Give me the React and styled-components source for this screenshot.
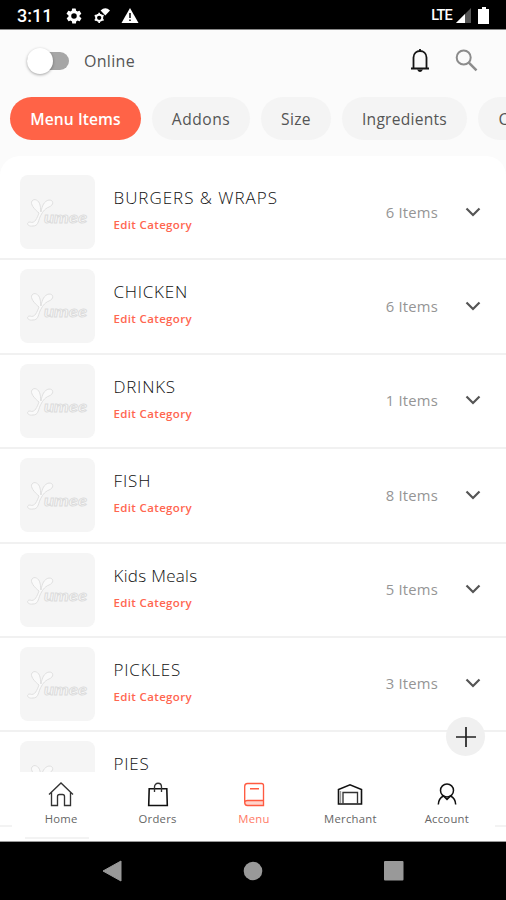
import styled, { createGlobalStyle } from 'styled-components';

const GlobalStyle = createGlobalStyle`
  body {
    margin: 0;
    background: #fbfbfb;
    font-family: "Open Sans", "Noto Sans", sans-serif;
  }
  * {
    box-sizing: border-box;
  }
  button {
    font-family: inherit;
  }
  svg {
    display: block;
  }
`

const Screen = styled.div`
  width: 506px;
  height: 900px;
  display: flex;
  flex-direction: column;
  overflow: hidden;
  background: #fbfbfb;
`

const StatusBar = styled.div`
  flex: none;
  height: 30px;
  padding: 2px 14px 0 17px;
  display: flex;
  align-items: center;
  justify-content: space-between;
  background: #000;
  border-bottom: 1px solid #888;
  color: #fff;
`

const StatusGroup = styled.div`
  display: flex;
  align-items: center;
  gap: ${props => props.$gap};
`

const Clock = styled.span`
  font-family: Roboto, sans-serif;
  font-size: 18px;
  font-weight: 500;
  width: 37px;
  white-space: nowrap;
`

const Network = styled.span`
  font-family: Roboto, sans-serif;
  font-size: 14.5px;
  font-weight: 500;
  letter-spacing: -0.8px;
`

const Header = styled.header`
  flex: none;
  height: 61px;
  padding: 0 28px 0 27px;
  display: flex;
  align-items: center;
  justify-content: space-between;
`

const HeaderGroup = styled.div`
  display: flex;
  align-items: center;
  gap: ${props => props.$gap};
`

const Track = styled.div`
  width: 42px;
  height: 18px;
  border-radius: 9px;
  background: #a6a6a6;
  display: flex;
  align-items: center;
`

const Thumb = styled.div`
  flex: none;
  width: 26px;
  height: 26px;
  border-radius: 50%;
  background: #fff;
  box-shadow: 0 1px 3px rgba(0, 0, 0, 0.35);
`

const Label = styled.span`
  font-size: ${props => props.$size}px;
  font-weight: ${props => props.$weight || 400};
  letter-spacing: ${props => props.$spacing || 0}px;
  line-height: ${props => props.$line || 20}px;
  color: ${props => props.$color};
  white-space: nowrap;
`

const Tabs = styled.nav`
  flex: none;
  height: 65px;
  padding: 6px 0 0 10px;
  display: flex;
  gap: 11px;
  overflow: hidden;
`

const Tab = styled.button`
  flex: none;
  width: ${props => props.$width}px;
  height: 43px;
  padding: 0;
  border: none;
  border-radius: 22px;
  background: ${props => (props.$active ? '#ff6347' : '#f4f4f4')};
`

const List = styled.main`
  flex: 1;
  min-height: 0;
  padding-top: 10px;
  border-radius: 20px 20px 0 0;
  background: #fff;
  overflow: hidden;
`

const Row = styled.div`
  height: 94.4px;
  padding: 9px 25px 0 20px;
  display: flex;
  border-bottom: 2px solid #f1f1f1;
`

const Picture = styled.div`
  flex: none;
  width: 75px;
  height: 74px;
  border-radius: 8px;
  background: #f5f5f5;
`

const RowText = styled.div`
  flex: 1;
  padding: 11px 0 0 18.5px;
  display: flex;
  flex-direction: column;
  gap: 5px;
`

const RowMeta = styled.div`
  height: 73px;
  display: flex;
  align-items: center;
  gap: 27px;
`

const BottomNav = styled.nav`
  flex: none;
  position: relative;
  height: 70px;
  padding: 0 11px 0 13px;
  display: flex;
  background: #fff;
  border-bottom: 1px solid #999;
`

const NavItem = styled.div`
  flex: 1;
  padding-top: 8px;
  display: flex;
  flex-direction: column;
  align-items: center;
  gap: 4px;
  color: ${props => (props.$active ? '#ff5a40' : '#333')};
`

const AddButton = styled.button`
  position: absolute;
  top: -55px;
  right: 21px;
  width: 39px;
  height: 39px;
  padding: 0;
  border: none;
  border-radius: 50%;
  display: flex;
  align-items: center;
  justify-content: center;
  background: #f0f0f0;
`

const Sliver = styled.div`
  position: absolute;
  left: ${props => props.$left}px;
  top: ${props => props.$top}px;
  width: ${props => props.$width}px;
  height: 2px;
  background: #f3f3f3;
`

const SystemBar = styled.div`
  flex: none;
  height: 58px;
  background: #000;
  display: flex;
  align-items: center;
  justify-content: space-between;
  padding: 0 102px;
`

const tabs = [
  { name: 'Menu Items', width: 131, active: true, spacing: 0.1 },
  { name: 'Addons', width: 98, spacing: 0.5 },
  { name: 'Size', width: 70, spacing: 0.3 },
  { name: 'Ingredients', width: 125, spacing: 0.25 },
]

const categories = [
  { name: 'BURGERS & WRAPS', items: 6, spacing: 0.98 },
  { name: 'CHICKEN', items: 6, spacing: 0.75 },
  { name: 'DRINKS', items: 1, spacing: 0.75 },
  { name: 'FISH', items: 8, spacing: 0.9 },
  { name: 'Kids Meals', items: 5, spacing: 0.3 },
  { name: 'PICKLES', items: 3, spacing: 0.8 },
  { name: 'PIES', items: 4, spacing: 0.8 },
]

const navItems = ['Home', 'Orders', 'Menu', 'Merchant', 'Account']

function Logo() {
  return (
    <svg width="75" height="74" viewBox="0 0 75 74" fill="#fafafa" stroke="#dcdcdc" strokeWidth="0.9">
      <path d="M19 38C14 34 10 29 12 26C14 23 19 25 20 30C21 33 20 36 21 37C22 31 24 26 29 25C34 25 34 30 29 32C24 34 22 38 20 42C18 47 18 51 13 51C7 52 6 47 10 47C15 49 17 43 19 38Z" />
      <text x="24" y="48" fontFamily="Lato" fontSize="16" fontStyle="italic" fontWeight="700" textLength="43" lengthAdjust="spacingAndGlyphs">umee</text>
    </svg>
  )
}

function GearIcon({ size }) {
  return (
    <svg width={size} height={size} viewBox="0 0 24 24" fill="#fff">
      <path fillRule="evenodd" d="M19.4 13a7.500 7.500 0 0 0 0-2l2.100-1.600a.5.5 0 0 0 .1-.7l-2-3.400a.5.5 0 0 0-.6-.2l-2.500 1a7.300 7.300 0 0 0-1.700-1l-.4-2.600a.5.5 0 0 0-.5-.5h-4a.5.5 0 0 0-.5.400l-.4 2.700a8 8 0 0 0-1.700 1l-2.500-1a.5.5 0 0 0-.6.2l-2 3.400a.5.5 0 0 0 .1.700L4.600 11a8 8 0 0 0 0 2l-2.100 1.600a.5.5 0 0 0-.1.700l2 3.400c.1.200.4.3.6.2l2.500-1c.5.400 1.100.7 1.700 1l.4 2.600c0 .3.200.5.500.5h4c.3 0 .5-.2.500-.5l.4-2.600a7.300 7.300 0 0 0 1.700-1l2.500 1c.2.1.5 0 .6-.2l2-3.400a.5.5 0 0 0-.1-.7zM12 15.700a3.700 3.700 0 1 1 0-7.400a3.700 3.700 0 0 1 0 7.400z" />
    </svg>
  )
}

function NavIcon({ name }) {
  return (
    <svg width="28" height="28" viewBox="0 0 28 28" fill="none" stroke="currentColor" strokeWidth="1.35">
      {name === 'Home' && <path d="M2 14.500L14 3L26 14.500M4.500 12.500V25.500H10.500V16.500Q10.500 14.500 12.500 14.500H15.500Q17.500 14.500 17.500 16.500V25.500H23.500V12.500" />}
      {name === 'Orders' && (
        <>
          <path stroke="#111" strokeWidth="1.600" d="M5.200 8.700H22.800L23.300 25.500H4.700Z" />
          <path d="M10.500 12V7C10.500 2 17.500 2 17.500 7V12" />
        </>
      )}
      {name === 'Menu' && (
        <>
          <path fill="#ffd3cb" stroke="none" d="M5 21H23.500V25.500H5Z" />
          <path d="M7.500 3.500H21.500Q23.500 3.500 23.500 5.500V25.500H7.500Q4.700 25.500 4.700 22.500V6.500Q4.700 3.500 7.500 3.500ZM4.700 22.500Q5 20.500 7.500 20.500H23.500M10 8.700H19" />
        </>
      )}
      {name === 'Merchant' && (
        <>
          <path stroke="#111" strokeWidth="1.600" d="M2.500 24V9.500L14 4.800L25.500 9.500V24Z" />
          <path d="M7 23.500V12.500H21.500V23.500" />
          <path stroke="#999" d="M4.500 11V23" />
        </>
      )}
      {name === 'Account' && (
        <>
          <circle cx="14" cy="10.500" r="6.500" stroke="#111" strokeWidth="1.500" />
          <path stroke="#111" strokeWidth="1.500" d="M5.300 24.500C5.500 20 7.500 17.500 10.500 16L14 19.500L17.500 16C20.500 17.500 22.500 20 22.700 24.500" />
        </>
      )}
    </svg>
  )
}

function App() {
  return (
    <>
      <GlobalStyle />
      <Screen>
        <StatusBar>
          <StatusGroup $gap="11px">
            <Clock>3:11</Clock>
            <GearIcon size={18} />
            <svg width="16" height="17" viewBox="0 0 17 17">
              <circle cx="5.500" cy="11" r="3.300" fill="none" stroke="#fff" strokeWidth="2" />
              <path d="M5.500 5.500V7M5.500 15V16.500M.8 8.300L2.300 9.200M8.700 12.800L10.200 13.700M.8 13.700L2.300 12.800M8.700 9.200L10.200 8.300" stroke="#fff" strokeWidth="1.800" />
              <path d="M7 3.200Q12-1.500 17 3.200L12 8.500Z" fill="#fff" />
            </svg>
            <svg width="18" height="17" viewBox="0 0 18 17">
              <path d="M9 1L17.500 16H.5Z" fill="#fff" />
              <path d="M9 6V11M9 12.500V14" stroke="#000" strokeWidth="1.500" />
            </svg>
          </StatusGroup>
          <StatusGroup $gap="3px">
            <Network>LTE</Network>
            <svg width="17" height="17" viewBox="0 0 17 17">
              <path d="M16 1V16H1Z" fill="#555" />
              <path d="M10 7V16H1Z" fill="#fff" />
            </svg>
            <svg width="17" height="18" viewBox="0 0 17 18">
              <path d="M7 0H11V2H14V17H3V2H7Z" fill="#fff" />
            </svg>
          </StatusGroup>
        </StatusBar>

        <Header>
          <HeaderGroup $gap="15px">
            <Track><Thumb /></Track>
            <Label $size={16} $spacing={0.3} $color="#555">Online</Label>
          </HeaderGroup>
          <HeaderGroup $gap="25px">
            <svg width="20" height="26" viewBox="0 0 20 26" fill="none" stroke="#151515" strokeWidth="1.800">
              <path d="M3.500 20V9.500C3.500 .8 16.500 .8 16.500 9.500V20M1 20.500H19M10 1V3" />
              <path d="M7 21.500Q10 26.500 13 21.500Z" fill="#151515" stroke="none" />
            </svg>
            <svg width="23" height="23" viewBox="0 0 23 23" fill="none" stroke="#8c8c8c" strokeWidth="2">
              <circle cx="8.700" cy="8.500" r="7" />
              <path d="M13.800 13.600L21.500 21.300" strokeWidth="2.500" />
            </svg>
          </HeaderGroup>
        </Header>

        <Tabs>
          {tabs.map(tab => (
            <Tab key={tab.name} $width={tab.width} $active={tab.active}>
              <Label $size={15.6} $weight={tab.active ? 600 : 400} $spacing={tab.spacing} $color={tab.active ? '#fff' : '#555'}>
                {tab.name}
              </Label>
            </Tab>
          ))}
          <Tab $width={51}><Label $size={16} $color="#555">C</Label></Tab>
        </Tabs>

        <List>
          {categories.map(category => (
            <Row key={category.name}>
              <Picture><Logo /></Picture>
              <RowText>
                <Label $size={17} $weight={300} $line={24} $spacing={category.spacing} $color="#111">{category.name}</Label>
                <Label $size={11.5} $weight={600} $line={20} $spacing={0.35} $color="#ff6650">Edit Category</Label>
              </RowText>
              <RowMeta>
                <Label $size={14.8} $spacing={0.2} $color="#959595">{category.items} Items</Label>
                <svg width="16" height="10" viewBox="0 0 16 10" fill="none" stroke="#555" strokeWidth="2.200">
                  <path d="M1.500 1.500L8 8L14.500 1.500" />
                </svg>
              </RowMeta>
            </Row>
          ))}
        </List>

        <BottomNav>
          <Sliver $left={0} $top={53} $width={12} />
          <Sliver $left={25} $top={65} $width={64} />
          <Sliver $left={495} $top={53} $width={11} />
          {navItems.map(name => (
            <NavItem key={name} $active={name === 'Menu'}>
              <NavIcon name={name} />
              <Label $size={11.3} $line={14} $spacing={0.25} $color={name === 'Menu' ? '#ff7a66' : '#666'}>{name}</Label>
            </NavItem>
          ))}
          <AddButton>
            <svg width="22" height="22" viewBox="0 0 22 22" stroke="#222" strokeWidth="1.700">
              <path d="M11 1V21M1 11H21" />
            </svg>
          </AddButton>
        </BottomNav>

        <SystemBar>
          <svg width="20" height="22" viewBox="0 0 20 22"><path d="M19 1V21L1 11Z" fill="#999" stroke="#999" strokeLinejoin="round" /></svg>
          <svg width="20" height="20" viewBox="0 0 20 20"><circle cx="10" cy="10" r="9.300" fill="#999" /></svg>
          <svg width="20" height="20" viewBox="0 0 20 20"><rect width="19.500" height="19.500" rx="1" fill="#999" /></svg>
        </SystemBar>
      </Screen>
    </>
  )
}

export default App
